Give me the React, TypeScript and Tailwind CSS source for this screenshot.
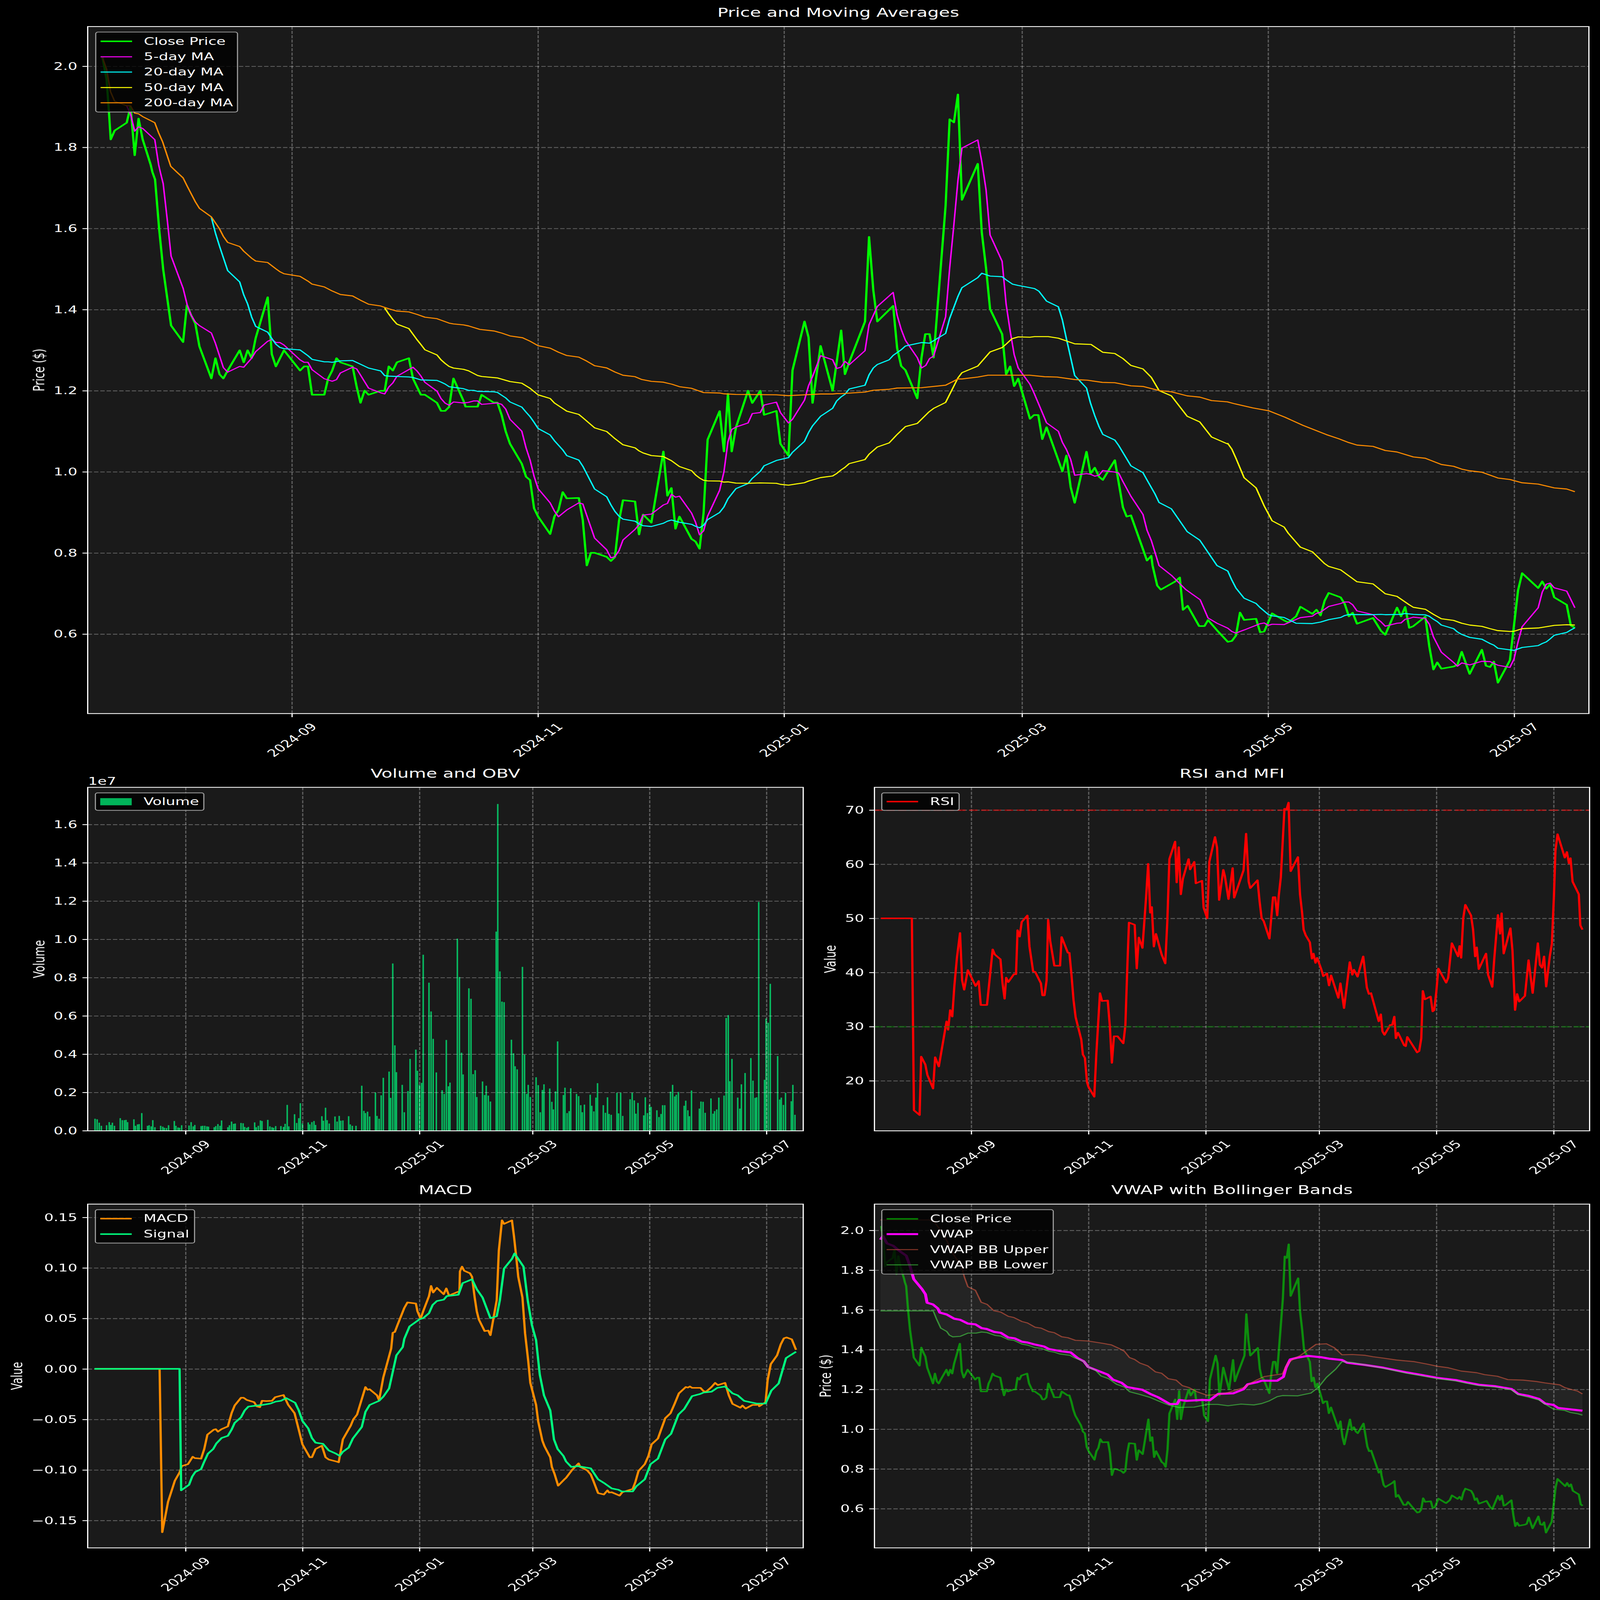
import React, { useLayoutEffect, useState } from 'react';

type P = [number, number];
type Zm = { x0: number; y0: number; sx: number; sy: number };
const pairs = (a: number[], f: (x: number, y: number) => P): P[] => {
  const o: P[] = [];
  for (let i = 0; i + 1 < a.length; i += 2) o.push(f(a[i], a[i + 1]));
  return o;
};
const mz = (z: Zm, a: number[]) => pairs(a, (x, y) => [z.x0 + x / z.sx, z.y0 + y / z.sy]);
const mv = (a: number[]) => pairs(a, (x, v) => [x, 270 + (2 - v) * 1649.5]);
const path = (p: P[]) => 'M' + p.map((q) => q[0].toFixed(1) + ' ' + q[1].toFixed(1)).join('L');

const Z1: Zm = { x0: 0, y0: 0, sx: 1.568, sy: 2.24 };
const Z7: Zm = { x0: 245, y0: 700, sx: 1.4933, sy: 1.4933 };
const Z8: Zm = { x0: 1295, y0: 1100, sx: 1.4255, sy: 1.2062 };
const Z9: Zm = { x0: 2350, y0: 300, sx: 1.4255, sy: 0.784 };
const Z10: Zm = { x0: 3400, y0: 1800, sx: 1.4933, sy: 1.4933 };
const Z11: Zm = { x0: 2440, y0: 4900, sx: 2.6133, sy: 2.6133 };
const ZR2: Zm = { x0: 2200, y0: 3000, sx: 0.6907, sy: 0.8711 };
const ZL3: Zm = { x0: 0, y0: 4750, sx: 0.6817, sy: 0.8924 };
const ZR3: Zm = { x0: 2200, y0: 4750, sx: 0.6907, sy: 0.8924 };

const close: P[] = [
  ...mz(Z1, [449,522,467,725,478,1040,485,1270,502,1190,555,1118,572,970,590,1415,607,1080,625,1270,660,1500]),
  ...mz(Z7, [270,0,281,45,298,345,315,590,348,932,398,1032,414,808,432,870,449,920,466,1058,516,1253,533,1130,550,1228,566,1253,584,1205,634,1082,651,1155,667,1082,684,1130,701,1007,751,760,768,1105,785,1180,819,1082,886,1205,903,1180,919,1180,936,1352,987,1352,1003,1253,1020,1205,1038,1130,1054,1155,1105,1180,1122,1303,1138,1401,1155,1327,1172,1352,1222,1328,1239,1328,1256,1180,1273,1205,1290,1155,1340,1130,1357,1253,1390,1352,1407,1352,1457,1401,1474,1450,1491,1450,1508,1426,1526,1253]),
  ...mz(Z8, [0,640,8,668,56,668,72,610,120,648,135,648,152,710,168,790,185,850,232,948,249,1012,265,1028,281,1167,297,1207,345,1293,362,1207,378,1175,395,1087,411,1118,459,1116,475,1225,491,1447,507,1385,522,1385,570,1405,587,1425,603,1406,619,1230,635,1127,683,1133,699,1295,715,1197,748,1237,796,888,812,1105,828,1067,844,1267,860,1207,908,1317,924,1330,940,1365,956,1190,972,830,1020,690,1037,888,1053,605,1068,888,1085,770,1133,590,1150,650,1182,590,1197,708,1246,689,1262,850,1294,908,1310,490,1358,250,1374,328,1390,650,1422,370,1470,590]),
  ...mz(Z9, [0,818,15,958,32,920,95,790,111,520,128,690,144,790,207,740,223,875,239,932,256,945,303,1035,320,905,335,830,352,830,368,905,416,420,432,145,449,155,465,66,481,402,544,287,560,505,577,620,593,750,641,830,657,958,673,933,689,996,705,972,752,1100,768,1088,785,1088,801,1165,818,1127,881,1268,897,1217,914,1318,930,1368,977,1205,993,1275,1010,1256,1027,1285,1042,1295,1090,1232,1122,1382,1137,1412,1154,1408,1218,1552,1235,1537,1240,1568]),
  ...mv([3233,0.72,3243,0.71,3283,0.73,3296,0.74,3305,0.66,3318,0.67,3350,0.62,3365,0.62,3375,0.635]),
  ...mz(Z10, [0,1140,45,1210,62,1205,79,1172,96,1032,113,1077,163,1070,180,1152,197,1147,230,1037,280,1080,297,1092,330,1055,348,997,398,1040,415,1015,432,1050,449,960,466,913,516,940,533,980,550,1055,566,1033,584,1100,651,1065,668,1105,684,1143,702,1167,751,1002,768,1055,785,998,802,1125,819,1115,869,1057,886,1240,903,1378,919,1335,936,1373,987,1360,1003,1350,1021,1270,1054,1405,1105,1258,1122,1355,1139,1363,1155,1330,1172,1458,1222,1322,1239,1110,1256,897,1273,793,1340,883,1357,843,1374,887,1390,860,1407,940,1459,985,1476,1110,1493,1125]),
];
const ma5: P[] = [
  ...mz(Z1, [555,965,572,1040,590,1195,607,1155,625,1170,678,1272,695,1500]),
  ...mz(Z7, [303,0,315,70,332,290,348,510,398,705,415,805,432,870,449,910,466,932,516,977,533,1040,566,1187,584,1215,634,1180,651,1185,684,1130,701,1090,751,1027,768,1016,785,1035,802,1035,819,1050,886,1140,903,1155,919,1155,936,1200,987,1255,1003,1262,1020,1270,1038,1260,1054,1220,1105,1185,1122,1195,1172,1312,1222,1340,1239,1347,1256,1305,1273,1280,1290,1240,1357,1185,1374,1208,1390,1238,1407,1277,1457,1330,1474,1375,1491,1403,1508,1416,1526,1396]),
  ...mz(Z8, [0,650,20,647,40,640,56,640,72,657,135,650,152,657,168,680,185,730,232,788,249,870,265,930,281,1010,297,1070,345,1140,362,1180,378,1208,411,1175,459,1140,475,1145,522,1313,570,1370,587,1410,603,1403,619,1375,635,1322,683,1270,699,1247,715,1200,748,1195,796,1150,812,1143,828,1098,844,1112,860,1107,908,1190,924,1235,940,1297,956,1278,972,1205,1020,1078,1037,988,1053,840,1068,780,1085,768,1133,748,1150,702,1182,697,1197,660,1246,646,1262,697,1294,748,1310,730,1358,636,1374,565,1390,520,1422,418,1470,438,1486,481]),
  ...mz(Z9, [0,935,15,917,32,928,95,883,111,800,144,742,207,697,223,770,239,815,256,850,303,905,320,938,337,930,352,908,368,900,416,775,432,620,449,480,465,340,481,237,544,211,560,280,577,370,593,514,641,598,657,735,673,820,689,895,705,938,752,990,768,1018,785,1050,818,1113,865,1140,881,1175,897,1198,914,1230,930,1280,977,1275,993,1277,1010,1283,1027,1280,1042,1265,1090,1270,1105,1273,1122,1300,1154,1347,1202,1405,1218,1455,1235,1488,1266,1568]),
  ...mv([3273,0.745,3313,0.71,3353,0.685,3375,0.64]),
  ...mz(Z10, [0,1097,45,1127,62,1147,79,1157,96,1147,113,1138,180,1100,197,1095,214,1110,230,1103,280,1105,348,1063,398,1054,415,1037,432,1030,466,995,516,977,533,968,550,968,566,985,584,1022,651,1045,668,1070,684,1088,702,1115,751,1097,768,1095,785,1073,802,1068,819,1060,869,1068,886,1103,903,1180,919,1225,936,1273,987,1335,1003,1358,1021,1338,1054,1350,1105,1328,1139,1330,1172,1352,1222,1365,1239,1315,1256,1210,1273,1118,1340,1003,1357,908,1374,860,1390,853,1407,882,1459,902,1476,952,1493,1003]),
];
const ma20: P[] = [
  ...mz(Z7, [516,275,533,370,550,450,584,598,634,667,651,745,667,800,684,880,701,937,751,972,768,1010,785,1045,802,1065,819,1072,886,1080,903,1098,919,1115,936,1137,987,1152,1003,1152,1020,1155,1054,1146,1105,1144,1172,1190,1222,1207,1239,1236,1256,1239,1340,1244,1357,1247,1390,1262,1457,1265,1474,1275,1491,1287,1508,1303]),
  ...mz(Z8, [0,580,20,588,40,588,56,593,120,595,135,598,152,612,168,625,185,645,232,670,249,695,265,717,281,745,297,775,345,807,362,835,378,857,395,880,411,908,459,930,475,960,522,1072,570,1110,587,1150,603,1182,619,1205,635,1220,683,1230,699,1243,715,1252,748,1256,796,1240,812,1230,828,1224,860,1235,908,1245,924,1255,940,1262,956,1250,972,1222,1020,1187,1037,1160,1053,1120,1085,1070,1133,1045,1150,1020,1182,985,1197,958,1246,932,1294,918,1310,892,1358,838,1374,795,1390,762,1422,715,1470,676,1486,640]),
  ...mz(Z9, [0,1030,15,1022,32,1005,95,993,111,960,128,938,144,927,191,912,207,898,239,880,256,868,303,860,320,857,352,859,416,828,432,780,465,710,481,682,544,650,560,636,593,645,641,647,657,657,683,671,705,675,752,682,770,685,787,693,818,725,865,743,881,785,897,845,914,905,930,962,977,1002,993,1050,1010,1090,1027,1125,1042,1150,1090,1168,1105,1185,1154,1250,1202,1272,1218,1295,1250,1340,1266,1367,1315,1387,1378,1460,1428,1487]),
  ...mz(Z10, [0,747,45,780,62,835,79,883,113,945,163,977,180,1002,214,1044,230,1052,280,1062,330,1097,398,1099,432,1090,466,1075,516,1062,533,1050,550,1044,651,1045,684,1043,702,1045,768,1043,785,1038,819,1043,869,1046,886,1055,903,1073,919,1087,936,1108,987,1130,1003,1150,1021,1165,1054,1183,1105,1194,1139,1220,1155,1230,1172,1249,1239,1262,1273,1244,1340,1233,1357,1220,1374,1210,1390,1192,1407,1170,1459,1153,1476,1138,1493,1125]),
];
const ma50: P[] = [
  ...mz(Z7, [1239,825,1256,862,1273,895,1290,923,1340,950,1374,1018,1390,1047,1407,1079,1457,1110,1474,1140,1491,1162,1508,1180,1526,1190]),
  ...mz(Z8, [0,485,20,492,56,515,72,520,135,527,185,545,232,553,265,578,297,610,345,628,362,650,411,690,459,706,475,722,522,772,570,790,603,825,635,855,683,870,699,885,715,895,748,908,796,913,828,933,860,962,908,982,924,1003,940,1018,956,1029,972,1032,1020,1033,1037,1038,1053,1037,1085,1043,1133,1044,1182,1042,1246,1044,1262,1049,1294,1053,1358,1041,1374,1033,1422,1016,1470,1008,1486,996]),
  ...mz(Z9, [0,1263,15,1255,32,1243,95,1230,111,1213,144,1190,191,1177,223,1150,256,1125,303,1115,350,1078,368,1067,416,1048,465,970,481,953,544,932,593,887,641,873,657,862,680,845,705,839,752,840,770,838,825,838,865,843,897,852,930,861,995,863,1042,888,1090,892,1122,908,1154,930,1202,941,1235,968,1266,1010,1315,1027,1378,1092,1428,1110,1475,1158,1538,1180]),
  ...mz(Z10, [45,5,62,40,79,95,113,213,163,275,197,385,230,475,280,513,297,550,348,635,398,663,449,735,466,752,516,773,584,845,651,858,702,918,751,934,802,985,819,1000,869,1012,903,1043,936,1070,987,1080,1021,1097,1054,1108,1105,1116,1139,1130,1172,1142,1222,1147,1239,1146,1273,1130,1340,1126,1407,1110,1459,1106,1493,1108]),
];
const ma200: P[] = [
  ...mz(Z1, [449,525,467,630,484,835,502,922,555,963,572,965,590,1030,607,1037,625,1062,678,1118,695,1210,712,1290,748,1515]),
  ...mz(Z7, [372,0,398,35,415,85,449,180,466,220,516,272,550,345,566,390,584,427,634,452,651,480,684,523,701,540,751,549,785,587,802,605,819,617,886,633,919,662,936,680,987,697,1020,722,1054,743,1105,752,1138,778,1172,802,1222,813,1256,830,1290,844,1340,849,1374,864,1407,881,1457,890,1508,917,1526,922]),
  ...mz(Z8, [0,267,20,272,65,289,122,297,152,307,185,321,235,330,265,347,297,369,345,381,378,401,411,417,459,425,490,444,522,467,570,478,603,498,635,514,683,521,710,535,748,544,796,548,830,558,860,570,908,578,940,592,956,599,1020,601,1037,605,1085,608,1182,609,1246,610,1294,614,1358,610,1422,606,1470,606,1486,604]),
  ...mz(Z9, [0,1020,95,1015,128,1009,191,1006,223,1002,320,1001,416,993,465,973,481,973,544,967,585,961,750,961,810,966,860,967,930,975,980,977,1040,984,1090,985,1154,995,1202,997,1266,1010,1315,1014,1378,1027,1428,1031,1475,1042,1538,1046]),
  ...mv([3450,1.168,3500,1.158,3544,1.151,3590,1.135,3640,1.115,3706,1.092,3740,1.082]),
  ...mz(Z10, [550,0,584,15,651,23,702,48,751,57,819,87,869,95,936,133,987,144,1021,161,1054,171,1105,180,1172,215,1222,224,1273,244,1340,252,1407,275,1459,282,1493,298]),
];

const closeR: P[] = close.map(([x, y]) => {
  const d = (x - 816) / 11.27;
  const v = 2 - (y - 270) / 1649.5;
  return [2714 + d * 5.37, 5004.4 + (2 - v) * 808.5];
});

const volRaw = [181,1350,185,1352,189,1364,193,1375,203,1373,208,1362,211,1372,214,1364,218,1375,229,1348,233,1355,237,1355,240,1354,243,1362,255,1352,258,1375,262,1370,265,1369,270,1330,281,1375,284,1373,288,1377,291,1355,295,1380,306,1375,310,1378,313,1382,317,1383,321,1373,332,1358,335,1375,339,1381,342,1382,346,1373,360,1374,364,1362,368,1377,371,1372,383,1376,386,1375,390,1375,394,1377,397,1378,408,1380,411,1376,415,1369,419,1375,422,1356,434,1380,437,1373,441,1360,445,1368,448,1367,459,1365,463,1366,466,1379,470,1382,473,1379,485,1363,488,1380,492,1375,496,1356,499,1358,510,1354,514,1377,518,1380,521,1382,525,1376,535,1376,540,1379,543,1368,547,1301,550,1377,561,1334,565,1365,569,1348,572,1295,576,1367,587,1363,590,1370,594,1362,598,1358,601,1372,613,1341,616,1357,620,1311,623,1355,627,1367,638,1342,642,1360,646,1340,649,1357,653,1356,664,1341,667,1370,671,1375,678,1375,689,1233,693,1322,696,1330,700,1325,704,1342,715,1257,718,1340,722,1350,726,1267,730,1205,741,1183,744,1276,748,800,752,1090,755,1185,766,1230,770,1327,777,1252,781,1138,792,1105,795,1180,799,1230,803,1223,806,769,817,868,821,970,825,1067,831,1186,842,1249,846,1262,850,1071,854,1235,857,1222,871,712,875,848,879,1116,882,1193,893,888,897,925,901,1192,905,1178,908,1273,919,1218,923,1266,926,1233,930,1268,934,1289,945,687,948,235,952,828,956,935,960,937,974,1070,978,1118,981,1164,985,1175,995,812,999,1123,1003,1262,1006,1230,1010,1273,1021,1203,1025,1231,1029,1327,1033,1248,1036,1228,1047,1243,1051,1290,1054,1317,1058,1253,1062,1076,1073,1266,1076,1240,1080,1330,1084,1323,1087,1242,1098,1262,1102,1270,1106,1302,1109,1327,1113,1300,1124,1265,1127,1304,1131,1324,1135,1275,1138,1224,1149,1302,1153,1329,1157,1274,1160,1333,1164,1336,1175,1258,1178,1331,1182,1258,1186,1340,1200,1281,1204,1258,1208,1285,1211,1332,1215,1294,1226,1338,1229,1274,1233,1330,1237,1300,1240,1308,1251,1320,1255,1344,1259,1333,1262,1302,1266,1302,1277,1254,1281,1230,1285,1271,1288,1265,1292,1255,1303,1304,1306,1286,1310,1320,1313,1341,1317,1250,1332,1314,1335,1289,1339,1290,1343,1329,1354,1278,1358,1332,1361,1323,1365,1317,1369,1275,1379,1268,1383,993,1387,983,1390,1217,1394,1138,1405,1275,1409,1314,1412,1228,1419,1188,1430,1135,1434,1215,1438,1276,1441,1274,1445,582,1456,1212,1459,995,1463,1010,1467,872,1481,1128,1485,1282,1488,1275,1492,1301,1496,1258,1507,1288,1510,1230,1514,1336];
const bars: P[] = pairs(volRaw, (x, y) => [x / 0.6817, 3000 + y / 0.8711]);

const rsi = mz(ZR2, [180,640,240,640,244,1320,255,1337,258,1130,266,1158,270,1195,281,1243,285,1132,292,1165,307,1005,310,1035,314,965,318,988,322,880,327,780,333,692,337,860,341,893,348,823,363,880,369,862,373,947,385,947,396,750,400,768,411,785,415,870,419,925,422,850,426,866,437,838,441,838,444,682,448,705,452,653,463,630,467,740,474,828,478,830,489,870,492,913,496,913,500,860,503,645,507,720,515,808,526,808,529,706,541,762,544,762,548,840,552,930,556,990,567,1070,570,1122,574,1135,578,1220,581,1238,592,1272,596,1120,603,905,607,933,618,931,622,1020,626,1152,630,1058,637,1058,648,1083,652,1020,656,800,659,655,670,663,674,818,678,708,685,745,692,565,696,447,700,620,703,600,707,740,711,695,722,768,729,800,733,650,737,430,748,368,751,513,755,388,759,555,763,500,774,430,777,467,785,440,788,516,800,507,803,602,810,640,814,440,825,352,829,390,833,575,841,468,844,490,851,572,859,462,862,567,880,470,885,340,890,510,893,533,907,505,911,580,915,640,919,650,930,712,937,565,941,565,945,630,948,560,952,495,959,252,963,255,967,230,971,473,985,423,989,555,993,620,996,680,1000,700,1008,725,1012,783,1015,765,1019,798,1022,780,1030,820,1034,845,1041,835,1045,878,1049,842,1063,922,1067,870,1074,958,1085,795,1090,840,1093,822,1100,847,1111,775,1118,885,1122,908,1126,905,1141,1005,1145,980,1148,1040,1152,1053,1163,1018,1167,1018,1171,988,1174,1065,1178,1045,1190,1090,1193,1093,1196,1060,1215,1115,1219,1110,1223,1065,1226,897,1230,927,1241,917,1245,970,1248,965,1252,900,1256,818,1271,868,1275,850,1279,780,1282,728,1294,775,1297,738,1300,780,1304,640,1308,592,1319,630,1323,680,1327,775,1330,743,1334,820,1348,765,1352,840,1360,883,1364,780,1371,628,1375,695,1378,622,1382,765,1395,675,1399,755,1404,965,1408,908,1412,935,1423,915,1430,788,1438,905,1448,728,1452,805,1456,815,1460,775,1464,882,1471,775,1475,730,1479,560,1482,400,1486,342,1500,425,1504,405,1508,445,1511,427,1515,510,1527,555,1530,665,1534,680]);

const macd = mz(ZL3, [180,729,304,729,309,1322,320,1212,333,1135,342,1105,346,1082,358,1075,367,1048,371,1053,383,1055,389,1020,395,968,407,950,411,948,415,957,422,948,434,938,441,890,447,862,459,834,464,834,470,842,484,850,489,865,495,868,499,845,507,846,518,845,524,832,540,824,549,860,561,890,569,950,576,1003,590,1050,594,1050,601,1020,613,1008,620,1050,626,1058,640,1065,645,1068,653,985,668,935,673,912,680,895,696,795,700,805,704,803,718,825,722,843,730,760,745,655,748,598,752,595,757,570,770,508,776,488,792,492,795,520,801,547,806,520,817,465,821,428,825,452,832,435,845,458,850,437,855,463,875,447,876,375,880,358,884,373,895,382,899,395,904,470,908,520,912,550,923,592,930,590,934,607,946,480,950,300,956,190,960,203,975,190,979,250,983,320,987,395,995,470,1000,600,1006,700,1010,780,1021,860,1025,920,1033,990,1037,1010,1048,1050,1051,1085,1056,1110,1063,1153,1075,1130,1078,1125,1090,1095,1102,1072,1105,1085,1118,1097,1125,1112,1130,1135,1139,1180,1150,1185,1157,1170,1160,1178,1165,1177,1180,1189,1185,1177,1205,1165,1210,1140,1216,1100,1228,1075,1235,1045,1241,1003,1253,982,1259,950,1267,908,1277,890,1285,855,1293,818,1306,795,1310,797,1314,793,1318,798,1334,798,1340,810,1345,812,1355,795,1362,780,1367,788,1381,780,1388,825,1395,856,1410,870,1414,862,1420,873,1433,860,1441,860,1445,857,1446,865,1458,850,1462,770,1468,712,1480,680,1487,640,1493,618,1498,615,1508,622,1516,660]);
const signal = mz(ZL3, [180,729,342,729,345,1170,360,1150,366,1120,372,1103,383,1093,388,1070,396,1037,406,1020,412,1000,422,980,434,972,441,950,447,925,459,905,466,880,473,866,490,862,500,860,515,855,525,848,535,845,545,835,562,852,569,880,576,918,587,945,594,980,601,997,615,1001,626,1025,640,1037,647,1045,653,1030,664,1015,672,982,689,940,696,885,704,860,722,845,730,830,741,800,748,740,755,680,767,650,770,620,780,575,799,549,806,545,817,527,824,497,832,483,845,478,851,465,873,460,881,418,899,404,908,440,919,470,934,545,946,538,952,480,960,365,975,330,980,310,997,358,1005,480,1013,570,1021,625,1028,750,1036,825,1048,880,1055,985,1062,1020,1073,1045,1078,1065,1088,1085,1100,1082,1125,1090,1139,1130,1150,1143,1165,1163,1178,1168,1184,1174,1205,1174,1212,1155,1228,1130,1239,1075,1253,1055,1267,985,1278,965,1292,895,1303,875,1318,828,1334,820,1340,815,1355,812,1366,798,1381,793,1395,818,1405,825,1417,845,1441,855,1458,855,1469,808,1483,782,1497,690,1505,680,1516,667]);

const vwap: P[] = [
  ...mz(Z11, [52,370,70,330,90,385,100,410,145,435,190,490,240,540,265,640,295,790,355,895,380,950,392,1040,435,1058,470,1100,485,1145,535,1165,590,1210,635,1222,690,1262,745,1270,790,1310,830,1320,880,1350,930,1360,985,1410,1030,1418,1085,1455,1125,1463,1180,1485,1245,1505,1280,1532,1375,1557,1440,1568]),
  ...mz(ZR3, [560,690,572,702,580,722,595,733,618,750,628,768,645,780,655,795,685,805,700,820,715,832,738,857,752,857,756,842,770,845,800,842,815,843,831,820,860,818,880,803,888,785,905,778,915,772,945,772,957,758,962,725,970,695,985,688,1005,682,1030,687,1045,692,1070,697,1080,707,1115,715,1150,725,1195,742,1220,750,1255,762,1290,770,1310,778,1335,787,1365,792,1397,802,1410,820,1430,827,1450,838,1462,855,1478,860,1487,871,1510,876,1534,881]),
];
const bbU: P[] = [
  ...mz(Z11, [52,160,415,160,450,190,490,270,540,390,590,540,640,640,665,770,690,870,745,908,787,1035,830,1057,880,1125,930,1140,985,1185,1025,1197,1085,1240,1125,1255,1180,1300,1225,1310,1280,1347,1320,1358,1375,1402,1420,1412,1475,1440,1520,1443,1568,1447]),
  ...mz(ZR3, [610,637,625,642,640,655,650,665,660,688,670,695,680,708,695,718,710,740,722,745,735,765,750,770,762,790,775,797,790,812,810,825,830,822,850,815,880,797,890,785,905,770,920,757,955,747,965,710,975,695,990,680,1005,660,1020,640,1040,638,1055,652,1070,678,1090,677,1115,680,1130,685,1150,690,1175,697,1210,703,1235,712,1255,720,1275,725,1300,737,1330,743,1345,750,1370,756,1390,768,1420,770,1445,775,1462,780,1490,787,1500,797,1515,805,1525,810,1534,820]),
];
const bbL: P[] = [
  ...mz(Z11, [52,1127,437,1127,460,1210,492,1310,535,1345,555,1385,580,1403,635,1397,690,1363,750,1363,790,1351,830,1358,890,1388,930,1395,985,1432,1025,1440,1085,1480,1125,1490,1180,1518,1225,1525,1280,1555,1320,1565]),
  ...mz(ZR3, [525,675,545,680,555,690,572,702,580,722,595,735,605,755,620,765,635,785,650,795,660,812,680,822,700,833,715,845,735,860,755,869,785,868,810,858,830,858,850,863,875,857,900,860,915,855,930,845,945,830,955,826,985,827,1010,817,1025,795,1040,760,1058,730,1070,703,1090,706,1115,715,1150,727,1195,745,1220,753,1255,765,1290,773,1310,781,1335,790,1365,795,1397,805,1410,823,1430,832,1450,842,1462,857,1478,875,1500,880,1510,887,1525,892,1534,897]),
];

const months = ['2024-09', '2024-11', '2025-01', '2025-03', '2025-05', '2025-07'];
const days = [0, 61, 122, 181, 242, 303];
const SW = 3.33;
const FS = 41.67;

type Tick = { y: number; t: string };
type AxesProps = {
  vb: [number, number, number, number];
  box: [number, number, number, number];
  x0: number;
  xk: number;
  ticks: Tick[];
  ylabel: string;
  ylx: number;
  under?: React.ReactNode;
  children?: React.ReactNode;
};

function Axes({ vb, box, x0, xk, ticks, ylabel, ylx, under, children }: AxesProps) {
  const [l, t, r, b] = box;
  const xs = days.map((d) => x0 + d * xk);
  return (
    <svg viewBox={vb.join(' ')} width={vb[2]} height={vb[3]} className="block overflow-visible">
      <rect x={l} y={t} width={r - l} height={b - t} fill="#1a1a1a" />
      {under}
      <g stroke="#ffffff" strokeOpacity={0.3} strokeWidth={SW} strokeDasharray="12.3 5.3">
        {xs.map((x) => (
          <line key={x} x1={x} x2={x} y1={t} y2={b} />
        ))}
        {ticks.map((k) => (
          <line key={k.t} x1={l} x2={r} y1={k.y} y2={k.y} />
        ))}
      </g>
      <g fill="none" strokeLinejoin="round" strokeLinecap="butt">
        {children}
      </g>
      <rect x={l} y={t} width={r - l} height={b - t} fill="none" stroke="#ffffff" strokeWidth={SW} />
      <g stroke="#ffffff" strokeWidth={SW}>
        {xs.map((x) => (
          <line key={x} x1={x} x2={x} y1={b} y2={b + 14.6} />
        ))}
        {ticks.map((k) => (
          <line key={k.t} x1={l - 14.6} x2={l} y1={k.y} y2={k.y} />
        ))}
      </g>
      <g fill="#ffffff" fontSize={FS}>
        {ticks.map((k) => (
          <text key={k.t} x={l - 29} y={k.y} textAnchor="end" dominantBaseline="central">
            {k.t}
          </text>
        ))}
        {xs.map((x, i) => (
          <text
            key={x}
            x={x}
            y={b + 107.5}
            textAnchor="middle"
            dominantBaseline="central"
            transform={`rotate(-45 ${x} ${b + 107.5})`}
          >
            {months[i]}
          </text>
        ))}
        <text
          x={ylx}
          y={(t + b) / 2}
          textAnchor="middle"
          dominantBaseline="central"
          transform={`rotate(-90 ${ylx} ${(t + b) / 2})`}
        >
          {ylabel}
        </text>
      </g>
    </svg>
  );
}

type Item = { label: string; swatch: string };
function Legend({ pos, items }: { pos: string; items: Item[] }) {
  return (
    <div
      className={`absolute ${pos} flex flex-col justify-center rounded-[8px] border-[3px] border-[#a3a3a3] bg-black/80 pl-[12px]`}
    >
      {items.map((it) => (
        <div key={it.label} className="flex h-[62.5px] items-center text-[41.67px] leading-none text-white">
          <span className={`mr-[33px] block w-[88px] ${it.swatch}`} />
          <span className="whitespace-nowrap">{it.label}</span>
        </div>
      ))}
    </div>
  );
}

const seq = (vals: number[], y0: number, dy: number, f: (v: number) => string): Tick[] =>
  vals.map((v, i) => ({ y: y0 + i * dy, t: f(v) }));

const priceTicks = (y0: number, dy: number) => seq([2, 1.8, 1.6, 1.4, 1.2, 1, 0.8, 0.6], y0, dy, (v) => v.toFixed(1));

export default function App() {
  const [fit, setFit] = useState<[number, number]>([1, 1]);
  useLayoutEffect(() => {
    const measure = () =>
      setFit([Math.min(1, window.innerWidth / 4470), Math.min(1, window.innerHeight / 6507)]);
    measure();
    window.addEventListener('resize', measure);
    return () => window.removeEventListener('resize', measure);
  }, []);
  return (
    <div className="h-screen w-screen overflow-hidden bg-black">
      <div
        className="flex h-[6507px] w-[4470px] origin-top-left flex-col bg-black font-['DejaVu_Sans',sans-serif] text-white"
        style={{ transform: `scale(${fit[0]}, ${fit[1]})` }}
      >
        <section className="relative h-[3110px] w-[4470px]">
          <h2 className="ml-[245px] flex h-[104px] w-[4194px] items-center justify-center text-[50px] font-normal leading-none">
            Price and Moving Averages
          </h2>
          <Axes
            vb={[0, 104, 4470, 3006]}
            box={[245, 108, 4439, 2902]}
            x0={816}
            xk={11.27}
            ticks={priceTicks(270, 329.9)}
            ylabel="Price ($)"
            ylx={110}
          >
            <path d={path(close)} stroke="#00ff00" strokeWidth={6.25} />
            <path d={path(ma5)} stroke="#ff00ff" strokeWidth={4.17} />
            <path d={path(ma20)} stroke="#00ffff" strokeWidth={4.17} />
            <path d={path(ma50)} stroke="#ffff00" strokeWidth={4.17} />
            <path d={path(ma200)} stroke="#ff8c00" strokeWidth={4.17} />
          </Axes>
          <Legend
            pos="left-[266px] top-[129px] h-[328px] w-[399px]"
            items={[
              { label: 'Close Price', swatch: 'h-[6px] bg-[#00ff00]' },
              { label: '5-day MA', swatch: 'h-[4px] bg-[#ff00ff]' },
              { label: '20-day MA', swatch: 'h-[4px] bg-[#00ffff]' },
              { label: '50-day MA', swatch: 'h-[4px] bg-[#ffff00]' },
              { label: '200-day MA', swatch: 'h-[4px] bg-[#ff8c00]' },
            ]}
          />
        </section>

        <div className="flex h-[1695px] w-[4470px]">
          <section className="relative h-full w-[2340px]">
            <h2 className="ml-[245px] flex h-[72px] w-[1999px] items-center justify-center text-[50px] font-normal leading-none">
              Volume and OBV
            </h2>
            <Axes
              vb={[0, 3182, 2340, 1623]}
              box={[245, 3202, 2244, 4599]}
              x0={519}
              xk={5.356}
              ticks={seq([0, 0.2, 0.4, 0.6, 0.8, 1, 1.2, 1.4, 1.6], 4599, -155.66, (v) => v.toFixed(1))}
              ylabel="Volume"
              ylx={110}
              under={
                <g fill="#00ff7f" fillOpacity={0.7}>
                  {bars.map(([x, y]) => (
                    <rect key={x} x={x - 2.1} y={y} width={4.2} height={4599 - y} />
                  ))}
                </g>
              }
            >
              <text x={246} y={3178} fill="#ffffff" fontSize={FS} dominantBaseline="central">
                1e7
              </text>
            </Axes>
            <Legend
              pos="left-[265px] top-[113px] h-[74px] w-[306px]"
              items={[{ label: 'Volume', swatch: 'h-[29px] bg-[#00ff7f]/70' }]}
            />
          </section>
          <section className="relative h-full w-[2130px]">
            <h2 className="ml-[103px] flex h-[72px] w-[1998px] items-center justify-center text-[50px] font-normal leading-none">
              RSI and MFI
            </h2>
            <Axes
              vb={[2340, 3182, 2130, 1623]}
              box={[2443, 3202, 4441, 4599]}
              x0={2714}
              xk={5.37}
              ticks={seq([70, 60, 50, 40, 30, 20], 3295, 220.2, (v) => String(v))}
              ylabel="Value"
              ylx={2320}
            >
              <path d={path(rsi)} stroke="#ff0000" strokeWidth={6.25} />
              <line x1={2443} x2={4441} y1={3295} y2={3295} stroke="#ff0000" strokeOpacity={0.5} strokeWidth={6.25} strokeDasharray="23.1 10" />
              <line x1={2443} x2={4441} y1={4175.8} y2={4175.8} stroke="#008000" strokeOpacity={0.5} strokeWidth={6.25} strokeDasharray="23.1 10" />
            </Axes>
            <Legend
              pos="left-[122px] top-[113px] h-[74px] w-[219px]"
              items={[{ label: 'RSI', swatch: 'h-[6px] bg-[#ff0000]' }]}
            />
          </section>
        </div>

        <div className="flex h-[1702px] w-[4470px]">
          <section className="relative h-full w-[2340px]">
            <h2 className="ml-[245px] flex h-[70px] w-[1999px] items-center justify-center text-[50px] font-normal leading-none">
              MACD
            </h2>
            <Axes
              vb={[0, 4875, 2340, 1632]}
              box={[245, 4897, 2244, 6295]}
              x0={519}
              xk={5.356}
              ticks={seq([0.15, 0.1, 0.05, 0, -0.05, -0.1, -0.15], 4951.7, 205.43, (v) => (v < 0 ? '\u2212' + (-v).toFixed(2) : v.toFixed(2)))}
              ylabel="Value"
              ylx={48}
            >
              <path d={path(macd)} stroke="#ff8c00" strokeWidth={6.25} />
              <path d={path(signal)} stroke="#00ff7f" strokeWidth={6.25} />
            </Axes>
            <Legend
              pos="left-[265px] top-[113px] h-[139px] w-[280px]"
              items={[
                { label: 'MACD', swatch: 'h-[6px] bg-[#ff8c00]' },
                { label: 'Signal', swatch: 'h-[6px] bg-[#00ff7f]' },
              ]}
            />
          </section>
          <section className="relative h-full w-[2130px]">
            <h2 className="ml-[103px] flex h-[70px] w-[1998px] items-center justify-center text-[50px] font-normal leading-none">
              VWAP with Bollinger Bands
            </h2>
            <Axes
              vb={[2340, 4875, 2130, 1632]}
              box={[2443, 4897, 4441, 6295]}
              x0={2714}
              xk={5.37}
              ticks={priceTicks(5004.4, 161.69)}
              ylabel="Price ($)"
              ylx={2307}
              under={<path d={path([...bbU, ...[...bbL].reverse()]) + 'Z'} fill="#808080" fillOpacity={0.1} />}
            >
              <path d={path(closeR)} stroke="#00ff00" strokeOpacity={0.5} strokeWidth={6.25} />
              <path d={path(vwap)} stroke="#ff00ff" strokeWidth={8.33} />
              <path d={path(bbU)} stroke="#ff6347" strokeOpacity={0.5} strokeWidth={4.17} />
              <path d={path(bbL)} stroke="#50ff50" strokeOpacity={0.5} strokeWidth={4.17} />
            </Axes>
            <Legend
              pos="left-[122px] top-[113px] h-[265px] w-[482px]"
              items={[
                { label: 'Close Price', swatch: 'h-[6px] bg-[#00ff00]/50' },
                { label: 'VWAP', swatch: 'h-[8px] bg-[#ff00ff]' },
                { label: 'VWAP BB Upper', swatch: 'h-[4px] bg-[#ff6347]/50' },
                { label: 'VWAP BB Lower', swatch: 'h-[4px] bg-[#50ff50]/50' },
              ]}
            />
          </section>
        </div>
      </div>
    </div>
  );
}
